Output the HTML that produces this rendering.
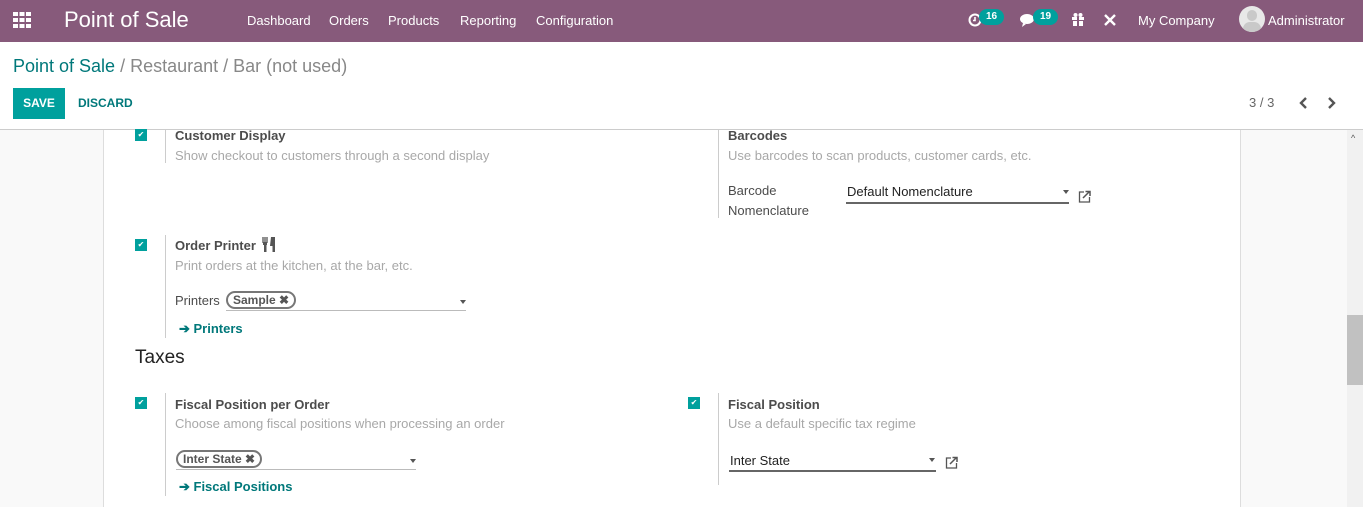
<!DOCTYPE html>
<html><head><meta charset="utf-8"><style>
*{box-sizing:border-box;margin:0;padding:0}
body{width:1363px;height:507px;overflow:hidden;font-family:"Liberation Sans",sans-serif;font-size:13px;color:#4c4c4c;background:#f9f9f9;position:relative}
.a{position:absolute;white-space:nowrap}
.nav{position:absolute;left:0;top:0;width:1363px;height:42px;background:#875a7b;color:#fff}
.cp{position:absolute;left:0;top:42px;width:1363px;height:88px;background:#fff;border-bottom:1px solid #ccc}
.sheet{position:absolute;left:103px;top:130px;width:1138px;height:377px;background:#fff;border-left:1px solid #ddd;border-right:1px solid #ddd}
.cb{position:absolute;width:12px;height:12px;background:#00a09d;color:#fff;font-size:8px;line-height:12px;text-align:center}
.vl{position:absolute;width:1px;background:#ccc}
.t{font-weight:bold;color:#4c4c4c}
.m{color:#a8a8a8}
.tag{position:absolute;border:2px solid #777;border-radius:10px;height:18px;font-weight:bold;font-size:12px;line-height:14px;padding:0 5px;color:#555}
.ul{position:absolute;height:1px;background:#bbb}
.ul2{position:absolute;height:2px;background:#666}
.caret{position:absolute;width:0;height:0;border-left:3px solid transparent;border-right:3px solid transparent;border-top:4px solid #555}
.lnk{color:#00787a;font-weight:bold}
.badge{position:absolute;background:#00a09d;color:#fff;font-size:10px;font-weight:bold;border-radius:8px;height:16px;line-height:16px;padding:0 7px}
</style></head><body>
<div class="nav">
<svg class="a" style="left:13px;top:12px" width="18" height="16"><g fill="#fff"><rect x="0" y="0" width="5" height="4"/><rect x="6.5" y="0" width="5" height="4"/><rect x="13" y="0" width="5" height="4"/><rect x="0" y="6" width="5" height="4"/><rect x="6.5" y="6" width="5" height="4"/><rect x="13" y="6" width="5" height="4"/><rect x="0" y="12" width="5" height="4"/><rect x="6.5" y="12" width="5" height="4"/><rect x="13" y="12" width="5" height="4"/></g></svg>
<div class="a" style="left:64px;top:7px;font-size:22px">Point of Sale</div>
<div class="a" style="left:247px;top:13px;font-size:13px">Dashboard</div>
<div class="a" style="left:329px;top:13px">Orders</div>
<div class="a" style="left:388px;top:13px">Products</div>
<div class="a" style="left:460px;top:13px">Reporting</div>
<div class="a" style="left:536px;top:13px">Configuration</div>
<svg class="a" style="left:968px;top:13px" width="14" height="14"><circle cx="7" cy="7" r="5.5" stroke="#fff" stroke-width="2" fill="none"/><path d="M7 4v3.5h-2" stroke="#fff" stroke-width="1.6" fill="none"/></svg>
<div class="badge" style="left:979px;top:9px">16</div>
<svg class="a" style="left:1020px;top:13px" width="18" height="14"><ellipse cx="7" cy="6" rx="7" ry="5" fill="#fff"/><path d="M3 10l-1 4 4-3z" fill="#fff"/></svg>
<div class="badge" style="left:1033px;top:9px">19</div>
<svg class="a" style="left:1071px;top:12px" width="14" height="14"><rect x="1" y="5" width="12" height="3" fill="#fff"/><rect x="2" y="9" width="10" height="5" fill="#fff"/><rect x="6" y="5" width="2" height="9" fill="#875a7b"/><circle cx="4.5" cy="3" r="2" fill="#fff"/><circle cx="9.5" cy="3" r="2" fill="#fff"/></svg>
<svg class="a" style="left:1103px;top:13px" width="14" height="14"><path d="M2 12L12 2M2 2l10 10" stroke="#fff" stroke-width="2.4"/></svg>
<div class="a" style="left:1138px;top:13px">My Company</div>
<div class="a" style="left:1239px;top:6px;width:26px;height:26px;border-radius:13px;background:#e8e8e8;overflow:hidden"><div style="position:absolute;left:8px;top:4px;width:10px;height:11px;border-radius:5px;background:#c9c9c9"></div><div style="position:absolute;left:4px;top:16px;width:18px;height:14px;border-radius:9px;background:#c9c9c9"></div></div>
<div class="a" style="left:1268px;top:13px">Administrator</div>
</div>
<div class="cp">
<div class="a" style="left:13px;top:14px;font-size:18px;color:#00787a">Point of Sale <span style="color:#888">/ Restaurant / Bar (not used)</span></div>
<div class="a" style="left:13px;top:46px;width:52px;height:31px;background:#00a09d;color:#fff;font-weight:bold;font-size:12px;line-height:31px;text-align:center">SAVE</div>
<div class="a" style="left:78px;top:54px;color:#00787a;font-weight:bold;font-size:12px">DISCARD</div>
<div class="a" style="left:1249px;top:53px;color:#666">3 / 3</div>
<svg class="a" style="left:1299px;top:55px" width="10" height="12"><path d="M7 1L2 6l5 5" stroke="#555" stroke-width="2.4" fill="none"/></svg>
<svg class="a" style="left:1326px;top:55px" width="10" height="12"><path d="M3 1l5 5-5 5" stroke="#555" stroke-width="2.4" fill="none"/></svg>
</div>
<div class="sheet"></div>
<div class="a" style="left:1347px;top:130px;width:16px;height:377px;background:#f1f1f1"></div>
<div class="a" style="left:1347px;top:315px;width:16px;height:70px;background:#c1c1c1"></div>
<div class="a" style="left:1351px;top:133px;font-size:9px;color:#555">^</div>

<div class="cb" style="left:135px;top:129px">✔</div>
<div class="vl" style="left:165px;top:130px;height:33px"></div>
<div class="a t" style="left:175px;top:128px">Customer Display</div>
<div class="a m" style="left:175px;top:148px">Show checkout to customers through a second display</div>

<div class="vl" style="left:718px;top:130px;height:88px"></div>
<div class="a t" style="left:728px;top:128px">Barcodes</div>
<div class="a m" style="left:728px;top:148px">Use barcodes to scan products, customer cards, etc.</div>
<div class="a" style="left:728px;top:183px">Barcode</div>
<div class="a" style="left:728px;top:203px">Nomenclature</div>
<div class="a" style="left:847px;top:184px;color:#222">Default Nomenclature</div>
<div class="ul2" style="left:846px;top:202px;width:223px"></div>
<div class="caret" style="left:1063px;top:190px"></div>
<svg class="a" style="left:1078px;top:190px" width="13" height="13"><path d="M6 2H1.5v10h10V7" stroke="#555" stroke-width="1.3" fill="none"/><path d="M5 8l6-6M7.5 1.5H12V6" stroke="#555" stroke-width="1.5" fill="none"/></svg>

<div class="cb" style="left:135px;top:239px">✔</div>
<div class="vl" style="left:165px;top:235px;height:103px"></div>
<div class="a t" style="left:175px;top:238px">Order Printer</div>
<svg class="a" style="left:262px;top:236px" width="14" height="16"><path d="M1 1v6M3 1v6M5 1v6" stroke="#555" stroke-width="1.3" fill="none"/><rect x="1" y="6" width="4" height="3" fill="#555"/><rect x="2" y="8" width="2.5" height="8" fill="#555"/><path d="M9 1h4v15h-2.5V10H8z" fill="#555"/></svg>
<div class="a m" style="left:175px;top:258px">Print orders at the kitchen, at the bar, etc.</div>
<div class="a" style="left:175px;top:293px">Printers</div>
<div class="tag" style="left:226px;top:291px">Sample ✖</div>
<div class="ul" style="left:226px;top:310px;width:240px"></div>
<div class="caret" style="left:460px;top:300px"></div>
<div class="a lnk" style="left:179px;top:321px">➔ Printers</div>

<div class="a" style="left:135px;top:347px;font-size:19px;color:#222">Taxes</div>

<div class="cb" style="left:135px;top:397px">✔</div>
<div class="vl" style="left:165px;top:393px;height:103px"></div>
<div class="a t" style="left:175px;top:397px">Fiscal Position per Order</div>
<div class="a m" style="left:175px;top:416px">Choose among fiscal positions when processing an order</div>
<div class="tag" style="left:176px;top:450px">Inter State ✖</div>
<div class="ul" style="left:176px;top:469px;width:240px"></div>
<div class="caret" style="left:410px;top:459px"></div>
<div class="a lnk" style="left:179px;top:479px">➔ Fiscal Positions</div>

<div class="cb" style="left:688px;top:397px">✔</div>
<div class="vl" style="left:718px;top:393px;height:92px"></div>
<div class="a t" style="left:728px;top:397px">Fiscal Position</div>
<div class="a m" style="left:728px;top:416px">Use a default specific tax regime</div>
<div class="a" style="left:730px;top:453px;color:#222">Inter State</div>
<div class="ul2" style="left:729px;top:470px;width:207px"></div>
<div class="caret" style="left:929px;top:458px"></div>
<svg class="a" style="left:945px;top:456px" width="13" height="13"><path d="M6 2H1.5v10h10V7" stroke="#555" stroke-width="1.3" fill="none"/><path d="M5 8l6-6M7.5 1.5H12V6" stroke="#555" stroke-width="1.5" fill="none"/></svg>
</body></html>
